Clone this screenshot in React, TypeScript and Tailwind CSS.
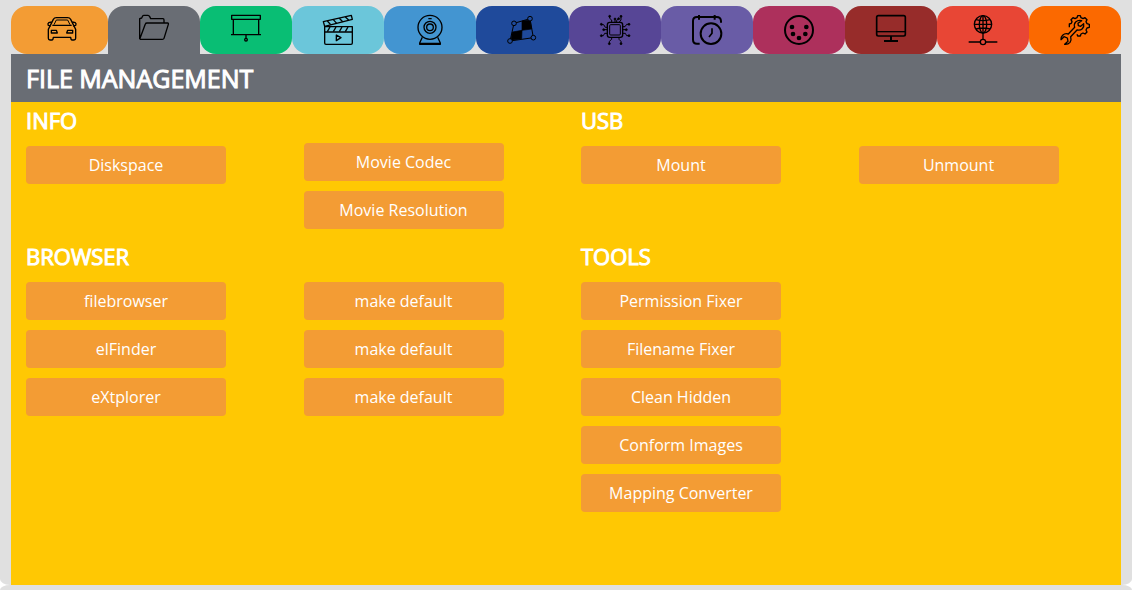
import { useState, type ReactNode } from "react";

type Tab = { name: string; color: string; icon: ReactNode };

const tabs: Tab[] = [
  {
    name: "Car",
    color: "bg-[#f39c34]",
    icon: (
      <>
        <path d="M10 31 L19 13 Q22 8 28 8 H62 Q68 8 71 13 L80 31" />
        <path d="M21 29 L28 15 H62 L69 29" strokeWidth="3" />
        <path d="M14 21 L5 23 Q1 26 4 31 L12 33 M76 21 L85 23 Q89 26 86 31 L78 33 M16 31 H74" />
        <path d="M9 33 L4 43 V70 Q4 75 9 75 H15 Q18 75 19 67 H71 Q72 75 75 75 H81 Q86 75 86 70 V43 L81 33" />
        <path d="M13 46 H28 L31 54 H13 Z M77 46 H62 L59 54 H77 Z" />
      </>
    ),
  },
  {
    name: "File management",
    color: "bg-[#696d74]",
    icon: (
      <path d="M2 72 V11 L8 9 L11 3 Q12 1 15 1 H27 Q30 1 32 5 L35 11 H72 Q75 11 75 15 V24 M2 73 L19 27 Q20 24 24 24 H86 Q89 24 88 28 L75 70 Q74 73 70 73 H2" />
    ),
  },
  {
    name: "Presentation",
    color: "bg-[#09be74]",
    icon: (
      <>
        <path d="M2 1 H88 V13 H2 Z M7 13 V58 M83 13 V58 M0 59 H90 M45 59 V69" />
        <circle cx="45" cy="74" r="4" />
      </>
    ),
  },
  {
    name: "Movies",
    color: "bg-[#6bc6da]",
    icon: (
      <>
        <path d="M5 35 H88 V84 Q88 88 84 88 H9 Q5 88 5 84 Z M5 51 H88" />
        <path d="M1 20 L85 1 L88 13 L5 34 Z" />
        <path d="M13 18 L23 29 M31 14 L41 25 M49 10 L59 20 M67 6 L77 15 M21 36 L13 50 M39 36 L31 50 M57 36 L49 50 M75 36 L67 50" />
        <path d="M40 60 V77 L54 68 Z" />
      </>
    ),
  },
  {
    name: "Webcam",
    color: "bg-[#4395d1]",
    icon: (
      <>
        <circle cx="45" cy="37" r="36" />
        <circle cx="45" cy="37" r="18" />
        <circle cx="45" cy="37" r="10" />
        <path d="M40 11 H50 M22 67 L14 84 V88 H76 V84 L68 67 M15 85 H75" />
      </>
    ),
  },
  {
    name: "Mapping",
    color: "bg-[#1f4a9b]",
    icon: (
      <>
        <path d="M21 25 L69 11 L79 68 L9 78 Z" strokeWidth="3" />
        <path d="M45 18 L69 15 L74 42 L45 46 Z M16 51 L45 46 L44 71 L12 76 Z" fill="black" strokeWidth="2" />
        <g className="fill-[#1f4a9b]" strokeWidth="3">
          <circle cx="21" cy="25" r="7" />
          <circle cx="69" cy="11" r="7" />
          <circle cx="9" cy="78" r="7" />
          <circle cx="79" cy="68" r="7" />
        </g>
      </>
    ),
  },
  {
    name: "Processor",
    color: "bg-[#574696]",
    icon: (
      <g strokeWidth="3">
        <rect x="22" y="22" width="46" height="45" rx="7" strokeWidth="4" />
        <rect x="29" y="29" width="32" height="31" rx="3" />
        <path d="M35 22 V15 L29 10 V6 M45 22 V14 M50 22 V16 L55 12 M57 22 L63 15 V5 M35 67 V73 L28 79 V84 M57 67 V73 L63 79 V84" />
        <path d="M22 37 H16 L11 29 H5 M22 44 H12 M22 55 H14 L10 62 H5 M68 35 H75 L80 28 H86 M68 44 H78 M68 55 H76 L80 62 H86" />
        <g fill="black" strokeWidth="2">
          <circle cx="29" cy="4" r="3" />
          <circle cx="45" cy="12" r="3" />
          <circle cx="56" cy="11" r="3" />
          <circle cx="63" cy="4" r="3" />
          <circle cx="28" cy="86" r="3" />
          <circle cx="63" cy="86" r="3" />
          <circle cx="4" cy="28" r="3" />
          <circle cx="11" cy="44" r="3" />
          <circle cx="4" cy="62" r="3" />
          <circle cx="87" cy="28" r="3" />
          <circle cx="79" cy="44" r="3" />
          <circle cx="87" cy="62" r="3" />
        </g>
      </g>
    ),
  },
  {
    name: "Schedule",
    color: "bg-[#695ca6]",
    icon: (
      <g strokeWidth="6">
        <path d="M23 86 H15 Q3 86 3 74 V18 Q3 6 15 6 H74 Q86 6 87 18 V23 M21 0 V14 M68 0 V14" />
        <circle cx="57" cy="56" r="31" />
        <path d="M60 40 V55 L51 66" strokeWidth="5" />
      </g>
    ),
  },
  {
    name: "MIDI",
    color: "bg-[#ad305c]",
    icon: (
      <>
        <circle cx="45" cy="45" r="42" strokeWidth="6" />
        <g fill="black" stroke="none">
          <circle cx="24" cy="36" r="7" />
          <circle cx="67" cy="36" r="7" />
          <circle cx="27" cy="57" r="7" />
          <circle cx="64" cy="57" r="7" />
          <circle cx="45" cy="69" r="7" />
        </g>
      </>
    ),
  },
  {
    name: "Display",
    color: "bg-[#972c2a]",
    icon: (
      <>
        <rect x="2" y="2" width="86" height="61" rx="5" strokeWidth="5" />
        <path d="M2 50 H88" />
        <path d="M45 63 V77 M24 78 H66" strokeWidth="6" />
      </>
    ),
  },
  {
    name: "Network",
    color: "bg-[#e84635]",
    icon: (
      <>
        <circle cx="45" cy="28" r="26" />
        <ellipse cx="45" cy="28" rx="11" ry="26" />
        <path d="M19 28 H71 M24 14 Q45 20 66 14 M24 42 Q45 36 66 42 M45 2 V73 M2 81 H37 M53 81 H88" />
        <circle cx="45" cy="81" r="8" />
      </>
    ),
  },
  {
    name: "Settings",
    color: "bg-[#fb6900]",
    icon: (
      <>
        <path d="M28 37 V27 L34 25 L36 20 L33 14 L39 8 L45 11 L51 8 L53 2 H61 L63 8 L69 11 L75 8 L81 14 L78 20 L81 26 L88 28 V37 L81 39 L78 45 L81 51 L75 57 L69 54 L63 57 L61 63 H53 L51 58" />
        <path d="M65 17 Q55 14 47 21 Q41 27 44 37 L25 57 Q15 54 8 61 Q2 67 3 74 L12 65 L22 69 L24 79 L14 88 Q24 89 30 82 Q35 75 32 65 L51 45 Q61 47 67 41 Q73 35 71 26 L62 34 L55 32 L54 25 Z" />
      </>
    ),
  },
];

function SectionTitle({ children }: { children: ReactNode }) {
  return (
    <h2 className="mb-2 h-9 text-[22px] leading-9 font-normal whitespace-nowrap [-webkit-text-stroke:1px_white]">
      {children}
    </h2>
  );
}

function Actions({ labels }: { labels: string[] }) {
  return (
    <div className="flex flex-col items-start gap-2.5">
      {labels.map((label, index) => (
        <button
          key={index}
          type="button"
          className="h-[38px] w-[200px] rounded bg-[#f39c34] text-base hover:bg-[#e88e25]"
        >
          {label}
        </button>
      ))}
    </div>
  );
}

export default function App() {
  const [active, setActive] = useState(1);
  return (
    <div className="flex min-h-screen flex-col bg-white font-['Open_Sans','Noto_Sans',sans-serif] text-white">
      <div className="flex grow flex-col bg-[#e0e0e0] px-[11px] pt-1.5 [border-bottom-left-radius:10px_6px] [border-bottom-right-radius:10px_6px]">
        <nav className="grid h-12 grid-cols-[97fr_repeat(11,92fr)]" aria-label="Sections">
          {tabs.map((tab, index) => (
            <button
              key={tab.name}
              type="button"
              aria-label={tab.name}
              aria-current={index === active ? "page" : undefined}
              onClick={() => setActive(index)}
              className={`flex items-center justify-center first:pl-1 ${tab.color} ${
                index === active ? "rounded-t-2xl" : "rounded-2xl"
              }`}
            >
              <svg
                viewBox="0 0 90 90"
                className="size-[30px] overflow-visible"
                fill="none"
                stroke="black"
                strokeWidth="4"
                strokeLinejoin="round"
                aria-hidden="true"
              >
                {tab.icon}
              </svg>
            </button>
          ))}
        </nav>
        <header className="h-12 bg-[#696d74] px-[15px]">
          <h1 className="text-[25px] leading-12 font-normal [-webkit-text-stroke:1px_white]">
            FILE MANAGEMENT
          </h1>
        </header>
        <main className="grow bg-[#ffc803] pb-2.5">
          <div className="grid min-h-[136px] grid-cols-4 *:px-[15px]">
            <section>
              <SectionTitle>INFO</SectionTitle>
              <Actions labels={["Diskspace"]} />
            </section>
            <div className="pt-[41px]">
              <Actions labels={["Movie Codec", "Movie Resolution"]} />
            </div>
            <section>
              <SectionTitle>USB</SectionTitle>
              <Actions labels={["Mount"]} />
            </section>
            <div className="pt-11">
              <Actions labels={["Unmount"]} />
            </div>
          </div>
          <div className="grid grid-cols-4 *:px-[15px]">
            <section>
              <SectionTitle>BROWSER</SectionTitle>
              <Actions labels={["filebrowser", "elFinder", "eXtplorer"]} />
            </section>
            <div className="pt-11">
              <Actions labels={["make default", "make default", "make default"]} />
            </div>
            <section>
              <SectionTitle>TOOLS</SectionTitle>
              <Actions
                labels={[
                  "Permission Fixer",
                  "Filename Fixer",
                  "Clean Hidden",
                  "Conform Images",
                  "Mapping Converter",
                ]}
              />
            </section>
          </div>
        </main>
      </div>
      <footer className="h-[5px] bg-[#e0e0e0] [border-top-left-radius:10px_5px] [border-top-right-radius:10px_5px]" />
    </div>
  );
}
